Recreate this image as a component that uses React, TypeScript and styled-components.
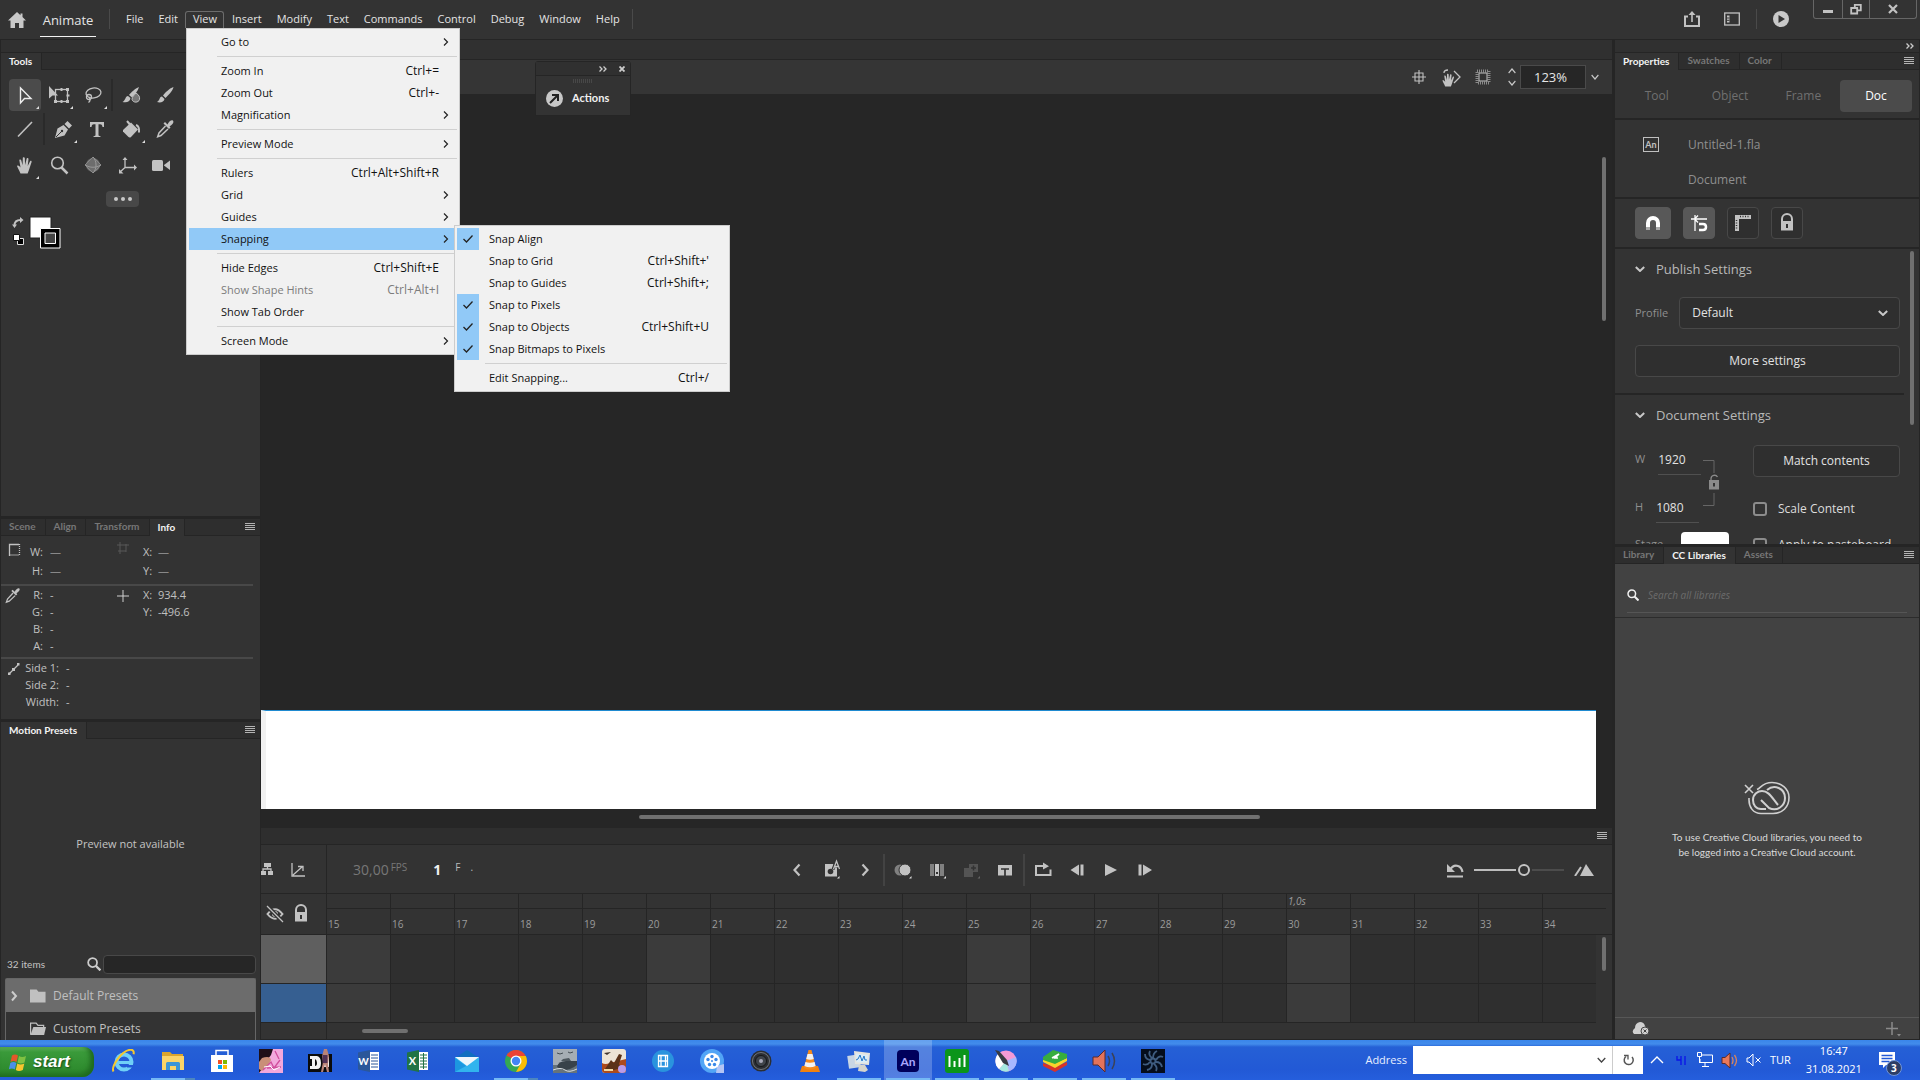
import React from 'react';
import styled, { createGlobalStyle, css } from 'styled-components';

const Global = createGlobalStyle`
  *, *::before, *::after { box-sizing: border-box; }
  html, body, #root { height: 100%; margin: 0; }
  body { background: #262626; color: #c4c4c4; font: 11px/16px "Open Sans", "Noto Sans", sans-serif; overflow: hidden; }
  button, input, select { font: inherit; color: inherit; margin: 0; padding: 0; border: 0; background: none; border-radius: 0; outline: none; }
  button { cursor: pointer; }
  svg { display: block; flex: none; }
  h2, p, ul, dl, dd, dt { margin: 0; padding: 0; font-weight: inherit; font-size: inherit; list-style: none; }
`;

const edge = '#252525';
const panel = '#333333';

/* ---------- shell ---------- */
const App_ = styled.div`
  position: relative;
  display: flex;
  flex-direction: column;
  height: 100vh;
`;
const Workspace = styled.div`
  flex: 1;
  min-height: 0;
  display: grid;
  grid-template-columns: 261px minmax(0, 1fr) 308px;
`;
const Glyph = styled.svg<{ $s?: number; $h?: number }>`
  width: ${p => p.$s ?? 16}px;
  height: ${p => p.$h ?? p.$s ?? 16}px;
`;

/* ---------- top bar ---------- */
const Header = styled.header`
  display: flex;
  height: 40px;
  flex: none;
  background: ${panel};
  border-bottom: 1px solid ${edge};
  color: #e4e4e4;
`;
const HomeButton = styled.button`
  width: 34px;
  height: 39px;
  display: grid;
  place-items: center;
`;
const AppName = styled.button`
  width: 56px;
  height: 37px;
  margin: 0 13px 0 6px;
  padding-top: 3px;
  font-size: 13px;
  border-bottom: 1px solid #f2f2f2;
`;
const HeaderRule = styled.i`
  width: 1px;
  height: 20px;
  margin-top: 9px;
  background: #4a4a4a;
`;
const MenuBar = styled.nav`
  display: flex;
  align-items: flex-start;
  padding: 11px 5px 0 8px;
`;
const MenuButton = styled.button<{ $open?: boolean }>`
  height: 17px;
  padding: 0 6px 0 7px;
  line-height: 14px;
  border: 1px solid transparent;
  border-bottom: 0;
  display: flex;
  align-items: flex-start;
  ${p => p.$open && css`border-color: #6c6c6c; border-radius: 3px 3px 0 0;`}
`;
const HeaderActions = styled.div`
  margin-left: auto;
  display: flex;
  padding-right: 8px;
  i { margin-left: 4px; }
`;
const HeaderAction = styled.button<{ $w?: number }>`
  width: ${p => p.$w ?? 40}px;
  height: 38px;
  display: grid;
  place-items: center;
`;
const WindowButtons = styled.div`
  display: flex;
  width: 104px;
  height: 19px;
  margin-right: 3px;
  border: 1px solid #666;
  border-top: 0;
  border-radius: 0 0 3px 3px;
`;
const WindowButton = styled.button<{ $w: number }>`
  width: ${p => p.$w}px;
  display: grid;
  place-items: center;
  & + & { border-left: 1px solid #666; }
`;

/* ---------- drop-down menus ---------- */
const MenuList = styled.div<{ $x: number; $y: number; $w: number }>`
  position: absolute;
  left: ${p => p.$x}px;
  top: ${p => p.$y}px;
  width: ${p => p.$w}px;
  padding: 2px;
  background: #f1f1f1;
  border: 1px solid #ccc;
  color: #111;
  z-index: 5;
`;
const MenuRow = styled.button<{ $active?: boolean; $dim?: boolean }>`
  display: grid;
  grid-template-columns: 32px 1fr auto 18px;
  align-items: center;
  width: 100%;
  height: 22px;
  text-align: left;
  color: ${p => (p.$dim ? '#7c7c7c' : 'inherit')};
  background: ${p => (p.$active ? '#91c9f7' : 'none')};
`;
const Shortcut = styled.span`
  font-size: 12px;
`;
const CheckCell = styled.span<{ $on?: boolean }>`
  width: 22px;
  height: 22px;
  display: grid;
  place-items: center;
  background: ${p => (p.$on ? '#91c9f7' : 'none')};
`;
const MenuRule = styled.hr`
  height: 1px;
  margin: 3px 0 3px 28px;
  border: 0;
  background: #d0d0d0;
`;

type Entry = { t: string; k?: string; sub?: boolean; on?: boolean; active?: boolean; dim?: boolean } | null;
const viewMenu: Entry[] = [
  { t: 'Go to', sub: true }, null,
  { t: 'Zoom In', k: 'Ctrl+=' }, { t: 'Zoom Out', k: 'Ctrl+-' }, { t: 'Magnification', sub: true }, null,
  { t: 'Preview Mode', sub: true }, null,
  { t: 'Rulers', k: 'Ctrl+Alt+Shift+R' }, { t: 'Grid', sub: true }, { t: 'Guides', sub: true },
  { t: 'Snapping', sub: true, active: true }, null,
  { t: 'Hide Edges', k: 'Ctrl+Shift+E' }, { t: 'Show Shape Hints', k: 'Ctrl+Alt+I', dim: true }, { t: 'Show Tab Order' }, null,
  { t: 'Screen Mode', sub: true },
];
const snapMenu: Entry[] = [
  { t: 'Snap Align', on: true }, { t: 'Snap to Grid', k: "Ctrl+Shift+'" }, { t: 'Snap to Guides', k: 'Ctrl+Shift+;' },
  { t: 'Snap to Pixels', on: true }, { t: 'Snap to Objects', k: 'Ctrl+Shift+U', on: true },
  { t: 'Snap Bitmaps to Pixels', on: true }, null,
  { t: 'Edit Snapping...', k: 'Ctrl+/' },
];
const Menu = ({ items, x, y, w }: { items: Entry[]; x: number; y: number; w: number }) => (
  <MenuList $x={x} $y={y} $w={w} role="menu">
    {items.map((m, i) =>
      m === null ? <MenuRule key={i} /> : (
        <MenuRow key={i} $active={m.active} $dim={m.dim} role="menuitem">
          <CheckCell $on={m.on}>
            {m.on && <Glyph $s={12} viewBox="0 0 12 12"><path d="M1.500 6 4.500 9 10.500 2.500" fill="none" stroke="#222" strokeWidth="1.300" /></Glyph>}
          </CheckCell>
          <span>{m.t}</span>
          <Shortcut>{m.k}</Shortcut>
          {m.sub && <Glyph $s={18} $h={10} viewBox="0 0 18 10"><path d="M5 1.500 8.500 5 5 8.500" fill="none" stroke="#222" strokeWidth="1.200" /></Glyph>}
        </MenuRow>
      ))}
  </MenuList>
);

/* ---------- panels & tabs ---------- */
const Column = styled.aside`
  display: flex;
  flex-direction: column;
  min-height: 0;
  background: ${panel};
  border-left: 1px solid ${edge};
  border-right: 1px solid ${edge};
`;
const RightColumn = styled(Column)`
  border-left-width: 3px;
`;
const TopStrip = styled.div`
  height: 13px;
  flex: none;
  padding: 0 5px;
  display: flex;
  justify-content: flex-end;
  align-items: center;
  background: #303030;
  border-bottom: 1px solid ${edge};
`;
const TabRow = styled.div<{ $gap?: boolean }>`
  display: flex;
  flex: none;
  height: ${p => (p.$gap ? 20 : 17)}px;
  background: #2e2e2e;
  border-bottom: 1px solid ${edge};
  border-top: ${p => (p.$gap ? `3px solid ${edge}` : 0)};
`;
const Tab = styled.button<{ $on?: boolean }>`
  padding: 0 9px 2px 8px;
  font: bold 10px/14px Lato, "Open Sans", sans-serif;
  color: ${p => (p.$on ? '#f4f4f4' : '#777')};
  background: ${p => (p.$on ? panel : 'none')};
  border-right: 1px solid ${edge};
  margin-bottom: ${p => (p.$on ? -1 : 0)}px;
`;
const PanelMenu = styled.button`
  margin-left: auto;
  padding: 0 5px;
`;
const Burger = () => (
  <Glyph $s={10} $h={8} viewBox="0 0 10 8"><path d="M0 .5h10M0 2.500h10M0 4.500h10M0 6.500h10" stroke="#b4b4b4" /></Glyph>
);
const Tabs = ({ names, on, gap, menu = true }: { names: string[]; on: string; gap?: boolean; menu?: boolean }) => (
  <TabRow $gap={gap}>
    {names.map(n => <Tab key={n} $on={n === on}>{n}</Tab>)}
    {menu && <PanelMenu aria-label="Panel menu"><Burger /></PanelMenu>}
  </TabRow>
);
const DoubleChevron = () => (
  <Glyph $s={8} $h={6} viewBox="0 0 8 6"><path d="M.5.5 3 3 .5 5.500M4.500.5 7 3 4.500 5.500" fill="none" stroke="#ccc" strokeWidth="1.300" /></Glyph>
);

/* ---------- tools ---------- */
const ToolsBody = styled.div`
  flex: 1;
  min-height: 0;
  padding: 9px 7px;
`;
const ToolRow = styled.div<{ $mt?: number }>`
  display: flex;
  margin-top: ${p => p.$mt ?? 0}px;
`;
const ToolButton = styled.button<{ $on?: boolean }>`
  width: 32px;
  height: 32px;
  margin: 0 1px;
  border-radius: 4px;
  background: ${p => (p.$on ? '#4b4b4b' : 'none')};
`;
const ToolRule = styled.i`
  width: 2px;
  margin: 0 1px;
  background: #2a2a2a;
`;
const MoreTools = styled.button`
  display: flex;
  justify-content: center;
  align-items: center;
  gap: 3px;
  width: 33px;
  height: 16px;
  margin: 10px 0 9px 98px;
  border-radius: 4px;
  background: #484848;
  i { width: 4px; height: 4px; border-radius: 50%; background: #c8c8c8; }
`;
const g = '#c2c2c2';
const corner = <path d="M30 27v3h-3z" fill="#ddd" />;
const S = { fill: 'none', stroke: g, strokeWidth: 1.3 } as const;
const lock = <><path d="M11 15v-3a5 5 0 0 1 10 0v3" fill="none" stroke={g} strokeWidth="2" /><path fillRule="evenodd" d="M10 14h12v9.500H10zM15 17v4h2v-4z" fill={g} /></>;
const handPath = 'M11.500 24.500C10 21 8.500 18.500 8 17c1-1 2.300-.2 3.500 1.600L10.300 11c1-.8 1.700-.3 2 .6l1.300 4.600.2-7.400c.8-.8 1.700-.6 2 .2l.3 7 1.600-6.600c.8-.7 1.700-.3 1.800.6l-.8 6.900 2.500-5c1-.5 1.500.1 1.400 1l-3 9-1 2.600z';
const dropperPath = <><path d="M18.500 11.500c1.500-3.500 4.500-5 5.500-3.800 1.200 1.300-.5 4-3.500 5.600l1 1.200-1.500 1.500-5.500-5.500 1.500-1.500z" fill={g} /><path d="m16.500 13-6.500 7-1.300 3.700L12 22.500l7-6.500" {...S} strokeWidth="1.500" /></>;
const tools: Record<string, React.ReactNode> = {
  selection: <><path d="M11.500 9v15l4-4.500h6.500z" fill="none" stroke="#eee" strokeWidth="1.400" />{corner}</>,
  transform: <><path d="M6 7l9 9.500H9.500L6 19.500z" fill={g} /><rect x="12.500" y="10.500" width="12" height="12" {...S} /><path d="M23 9h3v3h-3zM23 21h3v3h-3zM11 21h3v3h-3zM17.500 9h2v3h-2zM17.500 21h2v3h-2zM23.500 15.500h3v2h-3z" fill={g} />{corner}</>,
  lasso: <><ellipse cx="16.500" cy="14" rx="7.500" ry="5" {...S} transform="rotate(-8 16.500 14)" /><circle cx="12" cy="18" r="2.500" {...S} /><path d="M12 18c1.500 2 1.500 4-.5 5.500" {...S} />{corner}</>,
  fluid: <><path d="M24 8c-4 1.500-8 5.500-10 8l3 2.500c2.500-2.500 6-6.500 7-10.500zM13 17c-3 .5-2 4-5.500 6 4 1 7.500 0 8-4z" fill={g} /><path d="M21 14c3 2 4 4 3.500 6.500-1 3.500-6.500 3.500-7.500 0 0-3 2-4 4-6.500z" fill="#777" stroke={g} /></>,
  brush: <path d="M24.500 8c-4.500 1.500-8.500 6-10.500 8.500l2.500 2.500c2.500-2.500 7-6.500 8-11zM13 17.500c-3 .5-2 4-5 5.500 3.500 1 7 0 7.500-3z" fill={g} />,
  line: <path d="M9 23.500 23 9" {...S} strokeWidth="1.600" />,
  pen: <><path d="M8 25l2.500-9.500 6-3.500 4.500 4.500-3.500 6zM17.500 11l3-3 4.500 4.500-3 3z" fill={g} /><path d="m9 24 5.500-5.500" stroke={panel} /><circle cx="15" cy="18" r="1.200" fill={panel} />{corner}</>,
  text: <path d="M9 9h14v5h-1.500c-.3-2-.6-2.800-2.500-2.800h-1.500V22c0 .9.500 1 2 1.200V24h-7v-.8c1.500-.2 2-.3 2-1.200V11.200H13c-1.900 0-2.200.8-2.500 2.800H9z" fill={g} />,
  bucket: <><path d="M8 17 16 9.500l7 7-7 7.500c-1 .8-2 .5-2.500 0L8 18.500z" fill={g} /><path d="m12 8 5 6M21 12c3 1 3.500 3 3 7.500" {...S} strokeWidth="2" />{corner}</>,
  dropper: dropperPath,
  hand: <><path d={handPath} fill={g} />{corner}</>,
  zoom: <><circle cx="14.500" cy="14" r="5.800" {...S} strokeWidth="1.600" /><path d="m18.500 18.500 6 6" stroke={g} strokeWidth="2.500" /></>,
  sphere: <><circle cx="16" cy="16" r="7" fill="#6d6d6d" /><path d="M16 8l8 8-8 8-8-8z" fill="none" stroke="#888" /><path d="M16 8c4 4 4 12 0 16M8.500 16c4 3 11 3 15 0" fill="none" stroke="#999" /></>,
  axis: <><path d="M14 9v9.500h10M14 18.500 9 23" {...S} /><path d="M11.500 11 14 8l2.500 3zM23 15.500v6l3-3zM8 20v4.500h4.500z" fill={g} /></>,
  camera: <><rect x="7" y="11" width="11" height="11" rx="1.500" fill={g} /><path d="m19 16 6-4.500v9.500l-6-4.500z" fill={g} /></>,
};
const Tool = ({ id, on }: { id: string; on?: boolean }) => (
  <ToolButton $on={on} aria-label={id}><Glyph $s={32} viewBox="0 0 32 32">{tools[id]}</Glyph></ToolButton>
);
const Swatches = styled.div`
  display: flex;
  padding-left: 4px;
`;

/* ---------- info ---------- */
const InfoBody = styled.div`
  height: 183px;
  flex: none;
  padding-right: 7px;
`;
const InfoBlock = styled.div<{ $h: number; $row: number; $pt: number; $sides?: boolean }>`
  display: grid;
  grid-template-columns: ${p => (p.$sides ? '22px 34px 1fr' : '23px 17px 70px 24px 8px 1fr')};
  column-gap: 2px;
  grid-auto-rows: ${p => p.$row}px;
  height: ${p => p.$h}px;
  padding-top: ${p => p.$pt}px;
  border-bottom: ${p => (p.$sides ? 0 : 2)}px solid #484848;
  line-height: ${p => p.$row}px;
  color: #c0c0c0;
  b { font-weight: 400; text-align: right; white-space: nowrap; }
  span { padding-left: 5px; }
`;
const Dash = styled.span`
  color: #888;
`;
const Marker = styled.i`
  padding-top: 4px;
`;

/* ---------- presets ---------- */
const Presets = styled.div`
  height: 301px;
  flex: none;
  display: flex;
  flex-direction: column;
`;
const Preview = styled.p`
  flex: 1;
  display: grid;
  place-items: center;
  padding-bottom: 4px;
`;
const PresetSearch = styled.label`
  display: flex;
  align-items: center;
  height: 24px;
  padding: 0 4px 0 6px;
  margin-bottom: 2px;
  font: 10px/16px Lato, sans-serif;
  svg { margin-left: auto; margin-right: 2px; }
  input { width: 153px; height: 19px; border: 1px solid #484848; border-radius: 4px; background: #262626; }
`;
const PresetList = styled.ul`
  height: 62px;
  margin: 0 4px;
  border: 1px solid #666;
  border-bottom: 0;
  border-radius: 2px 2px 0 0;
`;
const Preset = styled.li<{ $on?: boolean }>`
  display: flex;
  align-items: center;
  height: 33px;
  padding-left: 3px;
  font-size: 12px;
  color: #c0c0c0;
  background: ${p => (p.$on ? '#6c6c6c' : 'none')};
  svg + svg { margin: 0 7px 0 9px; }
`;

/* ---------- centre ---------- */
const Centre = styled.main`
  display: flex;
  flex-direction: column;
  min-width: 0;
  min-height: 0;
`;
const DocStrip = styled.div`
  height: 20px;
  flex: none;
  background: #303030;
  border-bottom: 1px solid ${edge};
`;
const EditBar = styled.div`
  display: flex;
  justify-content: flex-end;
  align-items: center;
  height: 34px;
  flex: none;
  padding-right: 9px;
  background: #353535;
`;
const EditButton = styled.button`
  width: 32px;
  height: 32px;
`;
const ZoomBox = styled.div`
  display: flex;
  align-items: center;
  height: 24px;
  margin-left: 4px;
  button { width: 17px; height: 24px; display: grid; place-items: center; }
  input { width: 66px; height: 24px; padding-left: 13px; font-size: 13px; color: #e6e6e6; background: #262626; border: 1px solid #4a4a4a; }
`;
const Viewport = styled.div`
  flex: 1;
  min-height: 0;
  display: grid;
  grid-template: minmax(0, 1fr) 19px / minmax(0, 1fr) 16px;
`;
const Stage = styled.div`
  align-self: end;
  height: 99px;
  background: #fff;
  border-top: 1px solid #1f8ad0;
  border-left: 5px solid #f1f1f1;
`;
const VScroll = styled.i<{ $h: number; $mt: number }>`
  display: block;
  width: 4px;
  height: ${p => p.$h}px;
  margin: ${p => p.$mt}px 0 0 6px;
  border-radius: 2px;
  background: #707070;
`;
const HScroll = styled.i<{ $w: string; $ml: string }>`
  display: block;
  width: ${p => p.$w};
  height: 4px;
  margin: 6px 0 0 ${p => p.$ml};
  border-radius: 2px;
  background: #707070;
`;

/* ---------- timeline ---------- */
const Timeline = styled.section`
  flex: none;
  background: ${panel};
  border-bottom: 1px solid ${edge};
`;
const TimelineBar = styled.div`
  display: flex;
  height: 49px;
  border-bottom: 1px solid ${edge};
`;
const LayerHead = styled.div`
  display: flex;
  align-items: center;
  flex: none;
  width: 66px;
  border-right: 1px solid ${edge};
  overflow: hidden;
`;
const Playback = styled.div`
  flex: 1;
  display: grid;
  grid-template-columns: 1fr auto 1fr;
  align-items: center;
  padding-top: 2px;
`;
const Rate = styled.div`
  display: flex;
  padding-left: 26px;
  font-size: 14px;
  color: #777;
  sup { font-size: 10px; line-height: 10px; margin: 0 26px 0 2px; }
  b { color: #f0f0f0; }
  small { font-size: 10px; line-height: 10px; margin-left: 14px; color: #bbb; }
  small + small { margin-left: 10px; }
`;
const Transport = styled.div`
  display: flex;
  padding-left: 3px;
  i { width: 2px; height: 32px; margin: 0 1px; background: #434343; }
`;
const TransportButton = styled.button`
  width: 34px;
  height: 32px;
  padding-left: 1px;
`;
const TimeZoom = styled.div`
  display: flex;
  align-items: center;
  justify-content: flex-end;
  padding-right: 18px;
  gap: 10px;
`;
const ZoomRange = styled.input`
  appearance: none;
  width: 90px;
  height: 16px;
  background: linear-gradient(90deg, #bdbdbd 42px, transparent 42px 58px, #4c4c4c 58px) center / 100% 2px no-repeat;
  &::-webkit-slider-thumb { appearance: none; width: 12px; height: 12px; border: 2px solid #c4c4c4; border-radius: 50%; background: ${panel}; }
`;
const Ruler = styled.div`
  display: flex;
  height: 41px;
  border-bottom: 1px solid ${edge};
`;
const Cells = styled.div`
  display: flex;
  flex: 1;
  min-width: 0;
  overflow: hidden;
`;
const Tick = styled.div`
  flex: 0 0 64px;
  border-right: 1px solid ${edge};
  font-size: 10px;
  color: #9c9c9c;
  &:last-child { border-color: transparent; }
  em { display: block; height: 15px; padding-left: 1px; line-height: 15px; border-bottom: 1px solid ${edge}; }
  span { display: block; padding-left: 1px; line-height: 31px; }
`;
const Layers = styled.div`
  display: grid;
  grid-template-columns: minmax(0, 1fr) 16px;
`;
const LayerRow = styled.div<{ $h: number }>`
  display: flex;
  height: ${p => p.$h}px;
  border-bottom: 1px solid ${edge};
`;
const LayerCell = styled.div<{ $c: string }>`
  flex: 0 0 66px;
  border-right: 1px solid ${edge};
  background: ${p => p.$c};
`;
const Frame = styled.div<{ $key?: boolean }>`
  flex: 0 0 64px;
  border-right: 1px solid ${edge};
  background: ${p => (p.$key ? '#3b3b3b' : '#2f2f2f')};
`;
const LayerFoot = styled.div`
  display: flex;
  height: 16px;
`;

/* ---------- properties ---------- */
const Modes = styled.div`
  display: grid;
  grid-template-columns: 1fr 1fr 1fr 72px;
  height: 50px;
  padding: 10px 7px 6px 5px;
  border-bottom: 2px solid ${edge};
`;
const Mode = styled.button<{ $on?: boolean }>`
  font-size: 12px;
  border-radius: 4px;
  color: ${p => (p.$on ? '#fff' : '#707070')};
  background: ${p => (p.$on ? '#4b4b4b' : 'none')};
`;
const DocInfo = styled.div`
  display: grid;
  grid-template-columns: 16px 1fr;
  grid-auto-rows: 35px;
  column-gap: 29px;
  align-items: center;
  height: 79px;
  padding: 7px 0 0 28px;
  font-size: 12px;
  color: #8f8f8f;
  border-bottom: 2px solid ${edge};
`;
const DocBadge = styled.span`
  width: 16px;
  height: 15px;
  border: 1px solid #c0c0c0;
  color: #c0c0c0;
  font: bold 9px/13px Lato, sans-serif;
  text-align: center;
`;
const SnapButtons = styled.div`
  display: flex;
  gap: 12px;
  height: 50px;
  padding: 8px 20px;
  border-bottom: 2px solid ${edge};
`;
const SnapButton = styled.button<{ $on?: boolean }>`
  width: 32px;
  height: 32px;
  border-radius: 4px;
  border: 1px solid ${p => (p.$on ? '#585858' : '#484848')};
  background: ${p => (p.$on ? '#585858' : '#2f2f2f')};
  display: grid;
  place-items: center;
  &:first-child { width: 36px; }
`;
const Scroller = styled.div`
  display: grid;
  grid-template-columns: 1fr 15px;
  height: 295px;
  flex: none;
  overflow: hidden;
`;
const Section = styled.section`
  padding: 10px 4px 16px 20px;
  border-bottom: 2px solid ${edge};
`;
const SectionTitle = styled.button`
  display: flex;
  align-items: center;
  gap: 11px;
  height: 20px;
  font-size: 13px;
  font-weight: 500;
  color: #b8b8b8;
`;
const Field = styled.label`
  display: flex;
  align-items: center;
  gap: 11px;
  margin: 18px 0 16px;
  color: #8f8f8f;
`;
const SelectBox = styled.span`
  position: relative;
  flex: 1;
  select { appearance: none; width: 100%; height: 32px; padding-left: 12px; border: 1px solid #484848; border-radius: 4px; background: #2f2f2f; color: #e2e2e2; font-size: 12px; }
  svg { position: absolute; right: 12px; top: 13px; pointer-events: none; }
`;
const Outline = styled.button`
  display: block;
  width: 100%;
  height: 32px;
  border: 1px solid #484848;
  border-radius: 4px;
  background: #2f2f2f;
  color: #e2e2e2;
  font-size: 12px;
`;
const DocGrid = styled.div`
  display: grid;
  grid-template-columns: 67px 51px 1fr;
  margin-top: 20px;
`;
const Dimensions = styled.div`
  display: flex;
  flex-direction: column;
  gap: 18px;
`;
const Dimension = styled.label`
  display: flex;
  gap: 13px;
  height: 30px;
  line-height: 28px;
  color: #8f8f8f;
  input { width: 43px; border-bottom: 1px solid #505050; color: #e2e2e2; font-size: 12px; }
`;
const Check = styled.label`
  display: flex;
  align-items: center;
  gap: 11px;
  height: 36px;
  font-size: 12px;
  color: #dcdcdc;
  white-space: nowrap;
  input { appearance: none; width: 14px; height: 14px; border: 2px solid #8c8c8c; border-radius: 3px; }
`;
const Checks = styled.div`
  padding-top: 14px;
`;
const StageColour = styled.label`
  display: flex;
  gap: 18px;
  margin-top: -9px;
  line-height: 24px;
  white-space: nowrap;
  color: #8f8f8f;
  button { flex: none; width: 48px; height: 24px; border-radius: 4px; background: #fff; }
`;

/* ---------- libraries ---------- */
const Library = styled.div`
  flex: 1;
  min-height: 0;
  display: flex;
  flex-direction: column;
  background: #424242;
`;
const LibrarySearch = styled.label`
  display: flex;
  align-items: center;
  height: 54px;
  margin: 0;
  padding: 0 12px;
  border-bottom: 1px solid #2c2c2c;
  span { display: flex; align-items: center; flex: 1; gap: 9px; height: 36px; border-bottom: 1px solid #555; margin-bottom: -9px; }
  input { flex: 1; min-width: 0; height: 20px; font-size: 10px; font-style: italic; }
  input::placeholder { color: #6c6c6c; opacity: 1; }
`;
const SignedOut = styled.div`
  flex: 1;
  display: flex;
  flex-direction: column;
  align-items: center;
  padding-top: 163px;
  font: 10px/15px Lato, sans-serif;
  color: #dadada;
  text-align: center;
  svg { margin-bottom: 15px; }
`;
const LibraryFoot = styled.div`
  display: flex;
  justify-content: space-between;
  align-items: center;
  height: 23px;
  padding: 0 18px 0 17px;
  border-top: 1px solid #575757;
  border-bottom: 1px solid ${edge};
`;

/* ---------- floating actions ---------- */
const Actions = styled.section`
  position: absolute;
  left: 535px;
  top: 61px;
  width: 96px;
  height: 55px;
  background: ${panel};
  border: 1px solid ${edge};
  border-radius: 3px 3px 0 0;
  header { display: flex; justify-content: flex-end; align-items: center; gap: 12px; height: 14px; padding-right: 5px; border-bottom: 1px solid ${edge}; background: #303030; }
`;
const Grip = styled.i`
  display: block;
  width: 20px;
  height: 4px;
  margin: 3px 0 5px 37px;
  background: repeating-linear-gradient(90deg, #484848 0 1px, transparent 1px 2px);
`;
const ActionsLabel = styled.button`
  display: flex;
  align-items: center;
  gap: 9px;
  padding-left: 10px;
  font: bold 11px/20px Lato, sans-serif;
  color: #f0f0f0;
`;

/* ---------- taskbar ---------- */
const Taskbar = styled.footer`
  display: flex;
  flex: none;
  height: 40px;
  color: #fff;
  background: linear-gradient(#3a86ea, #428ceb 4px, #2560d6 7px, #2259d6 30px, #255edd);
`;
const Start = styled.button`
  display: flex;
  align-items: center;
  gap: 5px;
  width: 94px;
  height: 30px;
  margin: 7px 6px 0 0;
  padding-left: 9px;
  border-radius: 0 10px 12px 0;
  background: linear-gradient(#5fb05c, #3a9a3a 5px, #2f8c2f 22px, #277a27);
  box-shadow: inset -4px -2px 5px #1f6a1f;
  font: italic bold 17px/24px "Liberation Sans", sans-serif;
  color: #fff;
  text-shadow: 1px 1px 2px #164a16;
`;
const TaskButton = styled.button<{ $run?: 'split' | 'full'; $on?: boolean }>`
  display: grid;
  place-items: center;
  width: 48px;
  height: 40px;
  margin-right: 1px;
  padding-top: 3px;
  background: ${p => (p.$on ? 'rgba(255,255,255,.22)' : 'none')};
  border-bottom: 2px solid transparent;
  ${p => p.$run === 'full' && css`border-image: linear-gradient(90deg, transparent 4px, #76b9f5 4px 44px, transparent 44px) 2;`}
  ${p => p.$run === 'split' && css`border-image: linear-gradient(90deg, transparent 4px, #76b9f5 4px 35px, #4c86c0 35px 44px, transparent 44px) 2;`}
`;
const AddressBar = styled.label`
  display: flex;
  margin: 6px 4px 6px auto;
  line-height: 28px;
  gap: 6px;
  color: #e6eeff;
`;
const AddressField = styled.span`
  display: flex;
  align-items: center;
  width: 230px;
  height: 28px;
  padding-right: 8px;
  background: #fff;
  input { flex: 1; min-width: 0; height: 28px; }
  i { width: 1px; height: 28px; margin: 0 10px 0 6px; background: #ccc; }
`;
const Tray = styled.div`
  display: flex;
  align-items: center;
  width: 273px;
  svg { margin-right: 8px; }
`;
const Clock = styled.time`
  width: 62px;
  margin-left: 12px;
  line-height: 18px;
  text-align: center;
`;
const Notice = styled.button`
  position: relative;
  margin-left: 14px;
  svg { margin: 0; }
  b { position: absolute; left: 7px; top: 8px; width: 16px; height: 16px; border: 1px solid #6f94d8; border-radius: 50%; background: #2c3e66; font: bold 10px/14px "Open Sans", sans-serif; }
`;

const tb = (id: string) => {
  switch (id) {
    case 'Internet Explorer': return <><circle cx="12" cy="13" r="7.500" fill="none" stroke="#6fd0f7" strokeWidth="4" /><path d="M5 12h15v3H5z" fill="#6fd0f7" /><path d="M15 16h8v2.500h-8z" fill="#2259d6" /><path d="M1.500 22.500C-1 18 9 2 18 .8c4-.6 4 3 3.500 4.500" fill="none" stroke="#f5c82e" strokeWidth="2" /></>;
    case 'File Explorer': return <><path d="M1 3h8l2 2h11v16H1z" fill="#dba52d" /><path d="M1 7h22v14H1z" fill="#fbd468" /><path d="M5 21v-6.500q0-1.500 1.500-1.500h11q1.500 0 1.500 1.500V21h-4v-4H9v4z" fill="#3b95d8" /></>;
    case 'Store': return <><path d="M6 7V1.500h12V7" fill="none" stroke="#fff" strokeWidth="1.500" /><path d="M1 6h22v17H1z" fill="#fff" /><path d="M8 11h4v4H8z" fill="#f25022" /><path d="M13 11h4v4h-4z" fill="#7fba00" /><path d="M8 16h4v4H8z" fill="#00a4ef" /><path d="M13 16h4v4h-4z" fill="#ffb900" /></>;
    case 'Pink game': return <><path d="M0 0h24v24H0z" fill="#f2a8dc" /><path d="M0 0h14l-2 6-3 4-3 6-6 8z" fill="#1e0f18" /><path d="M3 9c4-1 8-2 9 2l-3 6-6 5-3-2v-7z" fill="#c98f78" /><path d="m4 21 8-8 3 6 6-8M8 19l14-1M16 2l4 8" fill="none" stroke="#d04e9c" strokeWidth="1.300" /><path d="m5 18 6-1 4 4 6-3" fill="none" stroke="#fff" /></>;
    case 'D game': return <><path d="M0 5h24v18H0z" fill="#0b0b0b" /><path d="M2 7h7q4 1 4 7t-4 6H2v-3h2v-7H2zM7 10v7q2 0 2-3t-2-4zM15 8h6v10h-6z" fill="#f2f2f2" /><path d="M16 0h3l2 7-1 8 1 8h-2l-2-8-2 8h-2l2-10-1-6z" fill="#b98276" /><path d="M14.500 6h5v8h-5z" fill="#513052" /></>;
    case 'Word': return <><path d="M11 3h11v18H11z" fill="#fff" /><path d="M14 6h7M14 9h7M14 12h7M14 15h7M14 18h7" stroke="#2b579a" /><path d="M1 3.500 13 1v22L1 20.500z" fill="#2b579a" /><text x="6.500" y="16" fontSize="10" fontWeight="700" fill="#fff" textAnchor="middle" fontFamily="Lato">W</text></>;
    case 'Excel': return <><path d="M11 3h11v18H11z" fill="#fff" /><path d="M14 6h7M14 9h7M14 12h7M14 15h7M14 18h7M17.500 4v16" stroke="#217346" /><path d="M1 3.500 13 1v22L1 20.500z" fill="#217346" /><text x="6.500" y="16" fontSize="11" fontWeight="700" fill="#fff" textAnchor="middle" fontFamily="Lato">X</text></>;
    case 'Mail': return <><path d="M0 9 12 1l12 8v3H0z" fill="#0f6fc0" /><path d="M0 8h24v15H0z" fill="#31b4ee" /><path d="M0 8h24L12 17z" fill="#eef6fb" /><path d="M0 23V9l11 8z" fill="#1c97e0" /></>;
    case 'Chrome': return <><circle cx="12" cy="12" r="11" fill="#34a853" /><path d="M12 12 2.500 6.500A11 11 0 0 1 21.500 6.500z" fill="#ea4335" /><path d="M12 7h9.800A11 11 0 0 1 12 23l5-9z" fill="#fbbc05" /><circle cx="12" cy="12" r="5.500" fill="#fff" /><circle cx="12" cy="12" r="4.200" fill="#4285f4" /></>;
    case 'Ship game': return <><path d="M0 0h24v24H0z" fill="#a5adb4" /><path d="M0 16h24v8H0z" fill="#66737b" /><path d="M4 18q1-6 9-6l11 0v4q-6 5-14 5z" fill="#38424a" /><path d="M8 12l2-2 6-1 2 3z" fill="#4d575e" /><path d="M0 21q8-3 12 0t12-1" fill="none" stroke="#d8dde0" /><path d="M4 4l3 1 3-1M15 3l2 1 3-1" fill="none" stroke="#444d54" /></>;
    case 'Orange game': return <><rect width="24" height="24" rx="3" fill="#ede4d6" /><path d="M0 14q3 2 8 0l16-4v11q0 3-3 3H3q-3 0-3-3z" fill="#ad4b1c" /><path d="M3 20 9 11l3 3 5-9 3 1-3 9 3 4-8 2z" fill="#5b3218" /><path d="M2 4l7-1-4 3z" fill="#41342c" /><path d="M2 21h9" stroke="#f2d8a0" strokeWidth="2" /><circle cx="20" cy="20" r="4" fill="#b99bea" /></>;
    case 'Video': return <><circle cx="12" cy="12" r="11" fill="#2a93de" /><path d="M7.500 6.500h9v11h-9zM7.500 12h9M10 6.500v11M14.500 6.500v11" fill="none" stroke="#fff" strokeWidth="1.300" /></>;
    case 'Film reel': return <><circle cx="12" cy="12" r="12" fill="#52a5f6" /><path d="M17 17l7-2v9h-8z" fill="#b4c5f5" /><circle cx="12" cy="12" r="8" fill="#fff" /><g fill="#3a88e8"><circle cx="12" cy="7.500" r="1.700" /><circle cx="16" cy="10.500" r="1.700" /><circle cx="14.500" cy="15.500" r="1.700" /><circle cx="9.500" cy="15.500" r="1.700" /><circle cx="8" cy="10.500" r="1.700" /><circle cx="12" cy="12" r="1" /></g></>;
    case 'Speaker': return <><circle cx="12" cy="12" r="10.500" fill="#2b2e33" /><circle cx="12" cy="12" r="8.500" fill="none" stroke="#70757c" /><circle cx="12" cy="12" r="5.500" fill="#3f444b" stroke="#15171a" /><circle cx="12" cy="12" r="2" fill="#aab" /></>;
    case 'VLC': return <><path d="M4 17h16l2 6H2z" fill="#f0810f" /><path d="M10.500 1h3L18 19q-6 3-12 0z" fill="#f58a1c" /><path d="m9.500 5-1.300 5q4 1.500 7.600 0l-1.300-5zM7.400 13l-1 4q5.600 2.500 11.200 0l-1-4q-4.600 1.500-9.200 0z" fill="#f2f2f2" /></>;
    case 'Monitor': return <><rect x="1" y="6" width="12" height="13" fill="#c8d6e4" transform="rotate(-8 7 12)" /><path d="m7 2 16 2-1 12-14-1z" fill="#e4e4de" /><path d="m9 4.500 12 1.500-1 8-10.500-.8z" fill="#d9ecf8" /><path d="m9 11 2-1 2-4 2 6 2-5 1 4h2" fill="none" stroke="#2277c8" /><path d="M12 16h6l3 5-3 2-7-1z" fill="#d4d4cc" /></>;
    case 'Animate': return <><rect x="1" y="1" width="22" height="22" rx="4" fill="#00005b" /><text x="12" y="16.500" fontSize="12" fontWeight="700" fill="#a8a6ff" textAnchor="middle" fontFamily="Lato">An</text></>;
    case 'Equalizer': return <><rect width="24" height="24" rx="3" fill="#0b951a" /><path d="M4.500 7v11M9.500 12v6M14.500 9v9M19.500 6v12" stroke="#fff" strokeWidth="2" /></>;
    case 'Krita': return <><circle cx="12" cy="12" r="10.500" fill="#f49ad6" /><path d="M12 12 22 8a10.500 10.500 0 0 1-7 14z" fill="#a8b8ff" /><path d="M12 12l3 10.300A10.500 10.500 0 0 1 5 20z" fill="#a5e8e0" /><path d="M12 12 5 20A10.500 10.500 0 0 1 6 3.300z" fill="#fff" /><path d="m1 1 4 1 8 9 2 6-6-3z" fill="#373a42" /></>;
    case 'BlueStacks': return <><path d="m0 17 12 6 12-7v-3L12 18 0 14z" fill="#d8332a" /><path d="m0 13 12 6 12-7V9L12 14 0 10z" fill="#fbd32b" /><path d="m0 8 10-7 14 4v4l-12 6L0 11z" fill="#37ad3f" /><path d="m9 9 7-4-4 4 3 0" stroke="#fff" fill="none" strokeWidth="1.500" /></>;
    case 'Volume': return <><path d="M1 8h5l7-7v22l-7-7H1z" fill="#e2735a" stroke="#5b2b2b" /><path d="M16 7q3 5 0 10M20 4q5 8 0 16" fill="none" stroke="#3c4256" strokeWidth="1.500" /></>;
    default: return <><path d="M0 0h24v24H0z" fill="#050d1c" /><g fill="none" stroke="#3f5c80" strokeWidth="1.800"><circle cx="12" cy="12" r="2.500" /><path d="M12 9q0-5 4-7M15 11q3-5 7-3M15 13q5 0 6 5M13 15q4 3 2 7M11 15q0 5-5 6M9 13q-3 4-7 2M9 11q-5-1-5-6M11 9Q7 6 9 2" /></g></>;
  }
};
const tasks: [string, ('split' | 'full')?][] = [
  ['Internet Explorer'], ['File Explorer', 'split'], ['Store'], ['Pink game'], ['D game'], ['Word'], ['Excel'], ['Mail'],
  ['Chrome', 'split'], ['Ship game'], ['Orange game'], ['Video'], ['Film reel'], ['Speaker'], ['VLC'], ['Monitor', 'full'],
  ['Animate', 'full'], ['Equalizer', 'full'], ['Krita', 'full'], ['BlueStacks', 'full'], ['Volume', 'full'], ['Fan', 'full'],
];

const tr: Record<string, React.ReactNode> = {
  prev: <path d="m18.500 10.500-5 5.500 5 5.500" {...S} strokeWidth="2.200" />,
  key: <><path d="M10 10h8l4 4v8.500H10z" fill={g} /><circle cx="15.500" cy="17.500" r="2.800" fill={panel} /><path d="m18 15.500 3.500-9 3.500 9" fill="none" stroke={panel} strokeWidth="3" /><path d="m18.500 15 3-8 3 8M19.500 12.500h4" fill="none" stroke={g} strokeWidth="1.300" /><path d="M24.500 22v2.500H22z" fill="#ddd" /></>,
  next: <path d="m13.500 10.500 5 5.500-5 5.500" {...S} strokeWidth="2.200" />,
  onion: <><circle cx="13" cy="16" r="5.500" fill="#808080" /><circle cx="18" cy="16" r="6" fill={g} stroke={panel} /><path d="M24.500 22v2.500H22z" fill="#ddd" /></>,
  multi: <><path d="M9 10h4v12H9zM19 10h4v12h-4z" fill="#808080" /><path d="M14 10h4v12h-4z" fill={g} /><path d="M15 18h2v2h-2z" fill={panel} /><path d="M25 22v2.500h-2.500z" fill="#ddd" /></>,
  insert: <><path d="M9 14h9v9H9zM14 10h9v8h-9z" fill="#545454" /><path d="M18.500 11.500v5M16 14h5" stroke={panel} strokeWidth="1.500" /><path d="M25 22v2.500h-2.500z" fill="#666" /></>,
  split: <><path d="M9 11h14v10.500H9z" fill={g} /><path d="M12 15h8M16 15v7" stroke={panel} strokeWidth="1.700" /></>,
  loop: <><path d="M12.500 12H9v9h14.500v-5.500" {...S} strokeWidth="2" /><path d="M12 11h4V8.500l6 3.700-6 3.300V13h-4z" fill={g} /></>,
  back: <path d="M9.500 16 18 10.500v11zM19.500 10.500h3v11h-3z" fill={g} />,
  play: <path d="M10 10v12l12-6z" fill={g} />,
  fwd: <path d="M9.500 10.500h3v11h-3zM14 10.500v11l9-5.500z" fill={g} />,
};
const TB = ({ id }: { id: string }) => (
  <TransportButton aria-label={id}><Glyph $s={32} viewBox="0 0 32 32">{tr[id]}</Glyph></TransportButton>
);
const Chev = ({ w = 10, sw = 2, c = '#c8c8c8', up = false }: { w?: number; sw?: number; c?: string; up?: boolean }) => (
  <Glyph $s={w} $h={6} viewBox="0 0 10 6" preserveAspectRatio="none"><path d={up ? 'M.8 5 5 1l4.200 4' : 'M.8 1 5 5l4.200-4'} fill="none" stroke={c} strokeWidth={sw} /></Glyph>
);
const SearchIcon = ({ s = 12, c = '#ccc' }: { s?: number; c?: string }) => (
  <Glyph $s={s} viewBox="0 0 12 12"><circle cx="4.800" cy="4.800" r="3.800" fill="none" stroke={c} strokeWidth="1.500" /><path d="m7.500 7.500 4 4" stroke={c} strokeWidth="2" /></Glyph>
);
const frames = Array.from({ length: 20 }, (_, i) => 15 + i);

export default function App() {
  return (
    <App_>
      <Global />
      <Header>
        <HomeButton aria-label="Home"><Glyph $s={18} viewBox="0 0 18 16"><path d="M9 0 0 8.500h2.500V16H7v-5h4v5h4.500V8.500H18L14.500 5V1.500h-2V3.300z" fill="#c8c8c8" /></Glyph></HomeButton>
        <AppName>Animate</AppName>
        <HeaderRule />
        <MenuBar>
          {['File', 'Edit', 'View', 'Insert', 'Modify', 'Text', 'Commands', 'Control', 'Debug', 'Window', 'Help'].map(m => (
            <MenuButton key={m} $open={m === 'View'}>{m}</MenuButton>
          ))}
        </MenuBar>
        <HeaderRule />
        <HeaderActions>
          <HeaderAction aria-label="Share"><Glyph $s={16} viewBox="0 0 16 16"><path d="M4 5.500H1V15h14V5.500h-3" fill="none" stroke={g} strokeWidth="2" /><path d="M8 11V2" stroke={g} strokeWidth="1.600" /><path d="M4.500 4 8 0l3.500 4z" fill={g} /></Glyph></HeaderAction>
          <HeaderAction aria-label="Workspaces"><Glyph $s={16} viewBox="0 0 16 14"><rect x=".7" y="1" width="14.600" height="12" fill="none" stroke={g} strokeWidth="1.300" /><path d="M3 3.500h2.500v7H3z" fill={g} /><path d="M3 6h2.500M3 8.300h2.500" stroke={panel} /></Glyph></HeaderAction>
          <HeaderRule />
          <HeaderAction $w={48} aria-label="Test movie"><Glyph $s={16} viewBox="0 0 16 16"><circle cx="8" cy="8" r="8" fill="#c8c8c8" /><path d="M5.500 4v8l6.500-4z" fill={panel} /></Glyph></HeaderAction>
        </HeaderActions>
        <WindowButtons>
          <WindowButton $w={28} aria-label="Minimize"><Glyph $s={10} viewBox="0 0 10 10"><path d="M0 6h10v3H0z" fill={g} /></Glyph></WindowButton>
          <WindowButton $w={27} aria-label="Restore"><Glyph $s={12} viewBox="0 0 12 12"><path d="M4.800 5V1.800h6v5.500H8M1.200 5h6v5.500h-6z" fill="none" stroke={g} strokeWidth="1.800" /></Glyph></WindowButton>
          <WindowButton $w={47} aria-label="Close"><Glyph $s={10} viewBox="0 0 10 10"><path d="m1 1 8 8M9 1 1 9" stroke={g} strokeWidth="2.200" /></Glyph></WindowButton>
        </WindowButtons>
      </Header>

      <Workspace>
        <Column>
          <TopStrip />
          <Tabs names={['Tools']} on="Tools" menu={false} />
          <ToolsBody>
            <ToolRow><Tool id="selection" on /><Tool id="transform" /><Tool id="lasso" /><ToolRule /><Tool id="fluid" /><Tool id="brush" /></ToolRow>
            <ToolRow $mt={2}><Tool id="line" /><ToolRule /><Tool id="pen" /><Tool id="text" /><Tool id="bucket" /><Tool id="dropper" /></ToolRow>
            <ToolRow $mt={4}><Tool id="hand" /><Tool id="zoom" /><Tool id="sphere" /><Tool id="axis" /><Tool id="camera" /></ToolRow>
            <MoreTools aria-label="More tools"><i /><i /><i /></MoreTools>
            <Swatches>
              <Glyph $s={50} $h={34} viewBox="0 0 50 34">
                <path d="M2.500 9.500c0-4 2-5.500 6-5.500" fill="none" stroke={g} strokeWidth="1.800" />
                <path d="M0 8.500h5L2.500 12zM8 1l3.500 3L8 7z" fill={g} />
                <path d="M5.500 22.500h6v6h-6z" fill="#000" stroke="#ddd" /><path d="M1.500 18.500h6v6h-6z" fill="#fff" stroke="#111" />
                <path d="M18 1h21v21H18z" fill="#fff" stroke="#222" />
                <path d="M28.500 12.500h19.500v19.500H28.500z" fill="#000" stroke="#fff" /><path d="M33 17h10.500v10.500H33z" fill="#444" stroke="#fff" />
              </Glyph>
            </Swatches>
          </ToolsBody>
          <Tabs names={['Scene', 'Align', 'Transform', 'Info']} on="Info" gap />
          <InfoBody>
            <InfoBlock $h={50} $row={19} $pt={6}>
              <Glyph $s={24} viewBox="0 0 24 24"><path d="M8.500 14V2.500H18" {...S} /><path d="M18.500 2v11H8" {...S} strokeDasharray="1 1" /></Glyph>
              <b>W:</b><Dash>—</Dash>
              <i><Glyph $s={12} viewBox="0 0 12 12"><path d="M0 3h12M3 0v12M9 2v8M1 9h8" stroke="#585858" fill="none" /></Glyph></i>
              <b>X:</b><Dash>—</Dash>
              <i /><b>H:</b><Dash>—</Dash><i /><b>Y:</b><Dash>—</Dash>
            </InfoBlock>
            <InfoBlock $h={73} $row={17} $pt={0}>
              <Glyph $s={24} viewBox="4 5 24 24"><g transform="translate(2 1) scale(.85)">{dropperPath}</g></Glyph>
              <b>R:</b><span>-</span>
              <Marker><Glyph $s={12} viewBox="0 0 12 12"><path d="M6 0v12M0 6h12" stroke="#d0d0d0" /></Glyph></Marker>
              <b>X:</b><span>934.4</span>
              <i /><b>G:</b><span>-</span><i /><b>Y:</b><span>-496.6</span>
              <i /><b>B:</b><span>-</span><i /><i /><i />
              <i /><b>A:</b><span>-</span>
            </InfoBlock>
            <InfoBlock $h={60} $row={17} $pt={0} $sides>
              <Glyph $s={20} viewBox="0 0 20 20"><path d="m8 15 9-9" {...S} /><path d="M7 13.500h2.500V16H7zM16 4h2.500v2.500H16zM11 9h3v3h-3z" fill={g} /></Glyph><b>Side 1:</b><span>-</span>
              <i /><b>Side 2:</b><span>-</span>
              <i /><b>Width:</b><span>-</span>
            </InfoBlock>
          </InfoBody>
          <Tabs names={['Motion Presets']} on="Motion Presets" gap />
          <Presets>
            <Preview>Preview not available</Preview>
            <PresetSearch><span>32 items</span><SearchIcon s={14} /><input aria-label="Search presets" /></PresetSearch>
            <PresetList>
              <Preset $on>
                <Glyph $s={12} viewBox="0 0 12 12"><path d="m3 1.500 4 4.500-4 4.500" fill="none" stroke="#ccc" strokeWidth="2" /></Glyph>
                <Glyph $s={16} $h={14} viewBox="8 0 17 14"><path d="M8 0h7l2 2.500h7.500V14H8z" fill="#c0c0c0" /></Glyph>
                Default Presets
              </Preset>
              <Preset>
                <Glyph $s={12} viewBox="0 0 12 12" />
                <Glyph $s={16} $h={14} viewBox="8 0 17 14"><path d="M8.600 13V.7h5.900l2 2.500h6v2" fill="none" stroke="#c0c0c0" strokeWidth="1.300" /><path d="M11.500 5H25l-2 8.500H8.500z" fill="#c0c0c0" /></Glyph>
                Custom Presets
              </Preset>
            </PresetList>
          </Presets>
        </Column>

        <Centre>
          <DocStrip />
          <EditBar>
            <EditButton aria-label="Center stage"><Glyph $s={32} viewBox="0 0 32 32"><path d="M16 9v14M9 16h14M12 12h8v8h-8z" {...S} strokeWidth="1.100" /></Glyph></EditButton>
            <EditButton aria-label="Rotate stage"><Glyph $s={32} viewBox="0 0 32 32"><g transform="translate(1 6) scale(.8)"><path d={handPath} fill={g} /></g><path d="m19 10 6 6-6 6M9 12q0-3 4-3" {...S} /></Glyph></EditButton>
            <EditButton aria-label="Clip content"><Glyph $s={32} viewBox="0 0 32 32"><rect x="10" y="10" width="12" height="12" fill="none" stroke="#8a8a8a" strokeWidth="3" strokeDasharray="1 1" /><rect x="12" y="12" width="8" height="8" fill="#333" stroke={g} /></Glyph></EditButton>
            <ZoomBox>
              <button aria-label="Step zoom"><Chev w={8} sw={1.5} up /><Chev w={8} sw={1.5} /></button>
              <input aria-label="Zoom" defaultValue="123%" />
              <button aria-label="Zoom presets"><Chev w={8} sw={1.5} /></button>
            </ZoomBox>
          </EditBar>
          <Viewport>
            <Stage />
            <VScroll $h={164} $mt={63} />
            <HScroll $w="46.500%" $ml="28.300%" />
          </Viewport>
          <Timeline>
            <TabRow><PanelMenu aria-label="Timeline menu"><Burger /></PanelMenu></TabRow>
            <TimelineBar>
              <LayerHead>
                <Glyph $s={30} $h={32} viewBox="0 0 30 32"><path d="M3 10h7v4H3zM0 18h5v4H0zM7 18h5v4H7z" fill={g} /><path d="M6.500 13v3M2 19v-3h8v3" {...S} /></Glyph>
                <Glyph $s={20} $h={32} viewBox="0 0 20 32"><path d="M1 10v13h13M2 22l9-8M7 13.500h5V18" {...S} /></Glyph>
              </LayerHead>
              <Playback>
                <Rate><span>30,00</span><sup>FPS</sup><b>1</b><small>F</small><small>.</small></Rate>
                <Transport>
                  <TB id="prev" /><TB id="key" /><TB id="next" /><i /><TB id="onion" /><TB id="multi" /><TB id="insert" /><TB id="split" /><i /><TB id="loop" /><TB id="back" /><TB id="play" /><TB id="fwd" />
                </Transport>
                <TimeZoom>
                  <Glyph $s={18} viewBox="0 0 18 18"><path d="M1 15.500h16" stroke={g} strokeWidth="2" /><path d="M4 9q3-5.500 8-4 3.500 1 4.500 6" fill="none" stroke={g} strokeWidth="2.200" /><path d="M1 3v8h8z" fill={g} /></Glyph>
                  <ZoomRange type="range" aria-label="Timeline zoom" min={0} max={100} defaultValue={56} />
                  <Glyph $s={20} $h={12} viewBox="0 0 20 12"><path d="M12 0l8 12H6z" fill={g} /><path d="M1 12 7 3" stroke={g} strokeWidth="2" /></Glyph>
                </TimeZoom>
              </Playback>
            </TimelineBar>
            <Ruler>
              <LayerHead>
                <Glyph $s={28} $h={20} viewBox="0 0 28 20"><path d="M6.500 10q7.500-9.500 15 0-7.500 9.500-15 0z" {...S} strokeWidth="2" /><circle cx="14" cy="10" r="3" fill={g} /><path d="M6 2l16 16" stroke={panel} strokeWidth="4" /><path d="M6 2l16 16" {...S} /></Glyph>
                <Glyph $s={26} viewBox="4 3 26 26">{lock}</Glyph>
              </LayerHead>
              <Cells>{frames.map(f => <Tick key={f}><em>{f === 30 ? '1,0s' : ''}</em><span>{f}</span></Tick>)}</Cells>
            </Ruler>
            <Layers>
              <div>
                <LayerRow $h={49}><LayerCell $c="#5f5f5f" /><Cells>{frames.map(f => <Frame key={f} $key={f % 5 === 0} />)}</Cells></LayerRow>
                <LayerRow $h={39}><LayerCell $c="#365f91" /><Cells>{frames.map(f => <Frame key={f} $key={f % 5 === 0} />)}</Cells></LayerRow>
              </div>
              <VScroll $h={34} $mt={2} />
            </Layers>
            <LayerFoot><LayerHead /><HScroll $w="46px" $ml="35px" /></LayerFoot>
          </Timeline>
        </Centre>

        <RightColumn>
          <TopStrip><DoubleChevron /></TopStrip>
          <Tabs names={['Properties', 'Swatches', 'Color']} on="Properties" />
          <Modes><Mode>Tool</Mode><Mode>Object</Mode><Mode>Frame</Mode><Mode $on>Doc</Mode></Modes>
          <DocInfo><DocBadge>An</DocBadge><span>Untitled-1.fla</span><i /><span>Document</span></DocInfo>
          <SnapButtons>
            <SnapButton $on aria-label="Snap to objects"><Glyph $s={16} viewBox="0 0 16 16"><path d="M3 12V8a5 5 0 0 1 10 0v4" fill="none" stroke="#fff" strokeWidth="4" /><path d="M1 12h4v3H1zM11 12h4v3h-4z" fill="#aaa" /></Glyph></SnapButton>
            <SnapButton $on aria-label="Snap align"><Glyph $s={18} viewBox="0 0 18 18"><path d="M5 1v16M1 5h16M8 1.500 4.500 5 8 8.500" fill="none" stroke="#fff" strokeWidth="1.300" /><path d="M9 10h4q3 0 3 3t-3 3H9" fill="none" stroke="#fff" strokeWidth="2.500" /></Glyph></SnapButton>
            <SnapButton aria-label="Rulers"><Glyph $s={16} viewBox="0 0 16 16"><path d="M0 0h16v4H4v12H0z" fill={g} /><path d="M5 1.500h10M1.500 5v10" stroke={panel} strokeWidth="1.500" strokeDasharray="1 1.500" /></Glyph></SnapButton>
            <SnapButton aria-label="Lock guides"><Glyph $s={26} viewBox="3 3 26 26">{lock}</Glyph></SnapButton>
          </SnapButtons>
          <Scroller>
            <div>
              <Section>
                <SectionTitle><Chev />Publish Settings</SectionTitle>
                <Field>Profile<SelectBox><select defaultValue="Default"><option>Default</option></select><Chev /></SelectBox></Field>
                <Outline>More settings</Outline>
              </Section>
              <Section>
                <SectionTitle><Chev />Document Settings</SectionTitle>
                <DocGrid>
                  <Dimensions>
                    <Dimension>W<input defaultValue="1920" /></Dimension>
                    <Dimension>H<input defaultValue="1080" /></Dimension>
                    <StageColour>Stage<button aria-label="Stage colour" /></StageColour>
                  </Dimensions>
                  <Glyph $s={22} $h={78} viewBox="0 0 22 78">
                    <path d="M1 15.500h11V28M1 60.500h11V48" fill="none" stroke="#666" />
                    <path d="M9 36v-2.500a3.500 3.500 0 0 1 6.500-1.500" fill="none" stroke="#8a8a8a" strokeWidth="1.300" /><path fillRule="evenodd" d="M7 35h10v9.500H7zM11 38v3.500h2V38z" fill="#8a8a8a" />
                  </Glyph>
                  <div>
                    <Outline>Match contents</Outline>
                    <Checks>
                      <Check><input type="checkbox" />Scale Content</Check>
                      <Check><input type="checkbox" />Apply to pasteboard</Check>
                    </Checks>
                  </div>
                </DocGrid>
              </Section>
            </div>
            <VScroll $h={174} $mt={2} />
          </Scroller>
          <Tabs names={['Library', 'CC Libraries', 'Assets']} on="CC Libraries" gap />
          <Library>
            <LibrarySearch><span><SearchIcon c="#f0f0f0" /><input aria-label="Search libraries" placeholder="Search all libraries" /></span></LibrarySearch>
            <SignedOut>
              <Glyph $s={46} $h={34} viewBox="0 0 46 34">
                <g fill="none" stroke="#d0d0d0" strokeWidth="1.600">
                  <path d="m1 4 8 8M9 4l-8 8" />
                  <path d="M13 8.500C17 7 18 1.500 28 1.500c9 0 17 6 17 15 0 10-7 16-16 16H17C9 32.500 5 26 5 19v-2" />
                  <path d="M22 28h-5c-5 0-8-4-8-9 0-6 5-9 9-9 7 0 10 7 16 14" strokeWidth="2" />
                  <path d="M17 19l8 8c8 4 16-2 16-10 0-10-11-14-18-8" strokeWidth="2" />
                </g>
              </Glyph>
              <p>To use Creative Cloud libraries, you need to<br />be logged into a Creative Cloud account.</p>
            </SignedOut>
            <LibraryFoot>
              <Glyph $s={18} $h={13} viewBox="0 0 18 13"><path d="M2 12q-3-3 1-6Q3 1 8 0q4 0 5 4l3 5-3 3z" fill="#d0d0d0" /><circle cx="13" cy="9" r="4" fill="#d0d0d0" stroke="#424242" /><path d="m11.500 7.500 3 3m0-3-3 3" stroke="#424242" /></Glyph>
              <Glyph $s={16} viewBox="0 0 16 16"><path d="M7 1v13M1 7.500h12" stroke="#8a8a8a" strokeWidth="1.500" /><path d="M12 13h4l-2 2.500z" fill="#8a8a8a" /></Glyph>
            </LibraryFoot>
          </Library>
        </RightColumn>
      </Workspace>

      <Taskbar>
        <Start>
          <Glyph $s={19} viewBox="0 0 19 19"><path d="M3 2.500q3-2 6 0L7.500 9q-3-2-6 0z" fill="#e5562a" /><path d="M10 3q3 2 7 0l-1.500 6.500q-4 2-7 0z" fill="#7fc142" /><path d="M1.300 10q3-2 6 0L5.800 16.500q-3-2-6 0z" fill="#4a90e8" /><path d="M8.300 10.500q3 2 7 0L13.800 17q-4 2-7 0z" fill="#f7c62f" /></Glyph>
          start
        </Start>
        {tasks.map(([id, run]) => (
          <TaskButton key={id} $run={run} $on={id === 'Animate'} aria-label={id}><Glyph $s={24} viewBox="0 0 24 24">{tb(id)}</Glyph></TaskButton>
        ))}
        <AddressBar>Address
          <AddressField><input aria-label="Address" /><Chev w={9} sw={1.5} c="#444" /><i />
            <Glyph $s={12} viewBox="0 0 12 12"><path d="M3 2.500A4.500 4.500 0 1 0 9 3" fill="none" stroke="#555" strokeWidth="1.500" /><path d="M1 1.500h4v4" fill="none" stroke="#555" strokeWidth="1.300" /></Glyph>
          </AddressField>
        </AddressBar>
        <Tray>
          <Glyph $s={20} viewBox="0 0 20 20"><path d="m4 13 6-6 6 6" fill="none" stroke="#fff" strokeWidth="1.400" /></Glyph>
          <Glyph $s={14} viewBox="0 0 14 14"><path d="M2 3v4h4M6 3v9M10 3v9" fill="none" stroke="#0a12e8" strokeWidth="1.300" /></Glyph>
          <Glyph $s={16} viewBox="0 0 16 16"><path d="M5 3h10.500v7.500H3V7M8 11v3M5 14.500h7M.5.5h4v4h-4zM2.500 5v6" fill="none" stroke="#fff" /></Glyph>
          <Glyph $s={17} viewBox="0 0 17 17"><path d="M1 5.500h3L9 1v15l-5-4.500H1z" fill="#e8785a" stroke="#5b2b2b" /><path d="M11 5q2 3.500 0 7M13.500 3q4 5.500 0 11" fill="none" stroke="#d8855f" strokeWidth="1.300" /></Glyph>
          <Glyph $s={16} viewBox="0 0 16 16"><path d="M1 6h2l4-4v12l-4-4H1zM9.500 5.500l5 5M14.500 5.500l-5 5" fill="none" stroke="#fff" /></Glyph>
          <span>TUR</span>
          <Clock>16:47<br />31.08.2021</Clock>
          <Notice aria-label="Notifications"><Glyph $s={16} viewBox="0 0 16 16"><path d="M0 0h16v13H7l-3 3v-3H0z" fill="#fff" /><path d="M2.500 3.500h11M2.500 6.500h11M2.500 9.500h8" stroke="#2259d6" strokeWidth="1.300" /></Glyph><b>3</b></Notice>
        </Tray>
      </Taskbar>

      <Actions>
        <header><DoubleChevron /><Glyph $s={6} viewBox="0 0 6 6"><path d="m.5.5 5 5m0-5-5 5" stroke="#ccc" strokeWidth="1.800" /></Glyph></header>
        <Grip />
        <ActionsLabel><Glyph $s={17} viewBox="0 0 17 17"><circle cx="8.500" cy="8.500" r="8.500" fill="#c8c8c8" /><path d="m4 13 7.500-7.500M6 5h6v6" fill="none" stroke="#222" strokeWidth="2" /></Glyph>Actions</ActionsLabel>
      </Actions>
      <Menu items={viewMenu} x={186} y={28} w={274} />
      <Menu items={snapMenu} x={454} y={225} w={276} />
    </App_>
  );
}
